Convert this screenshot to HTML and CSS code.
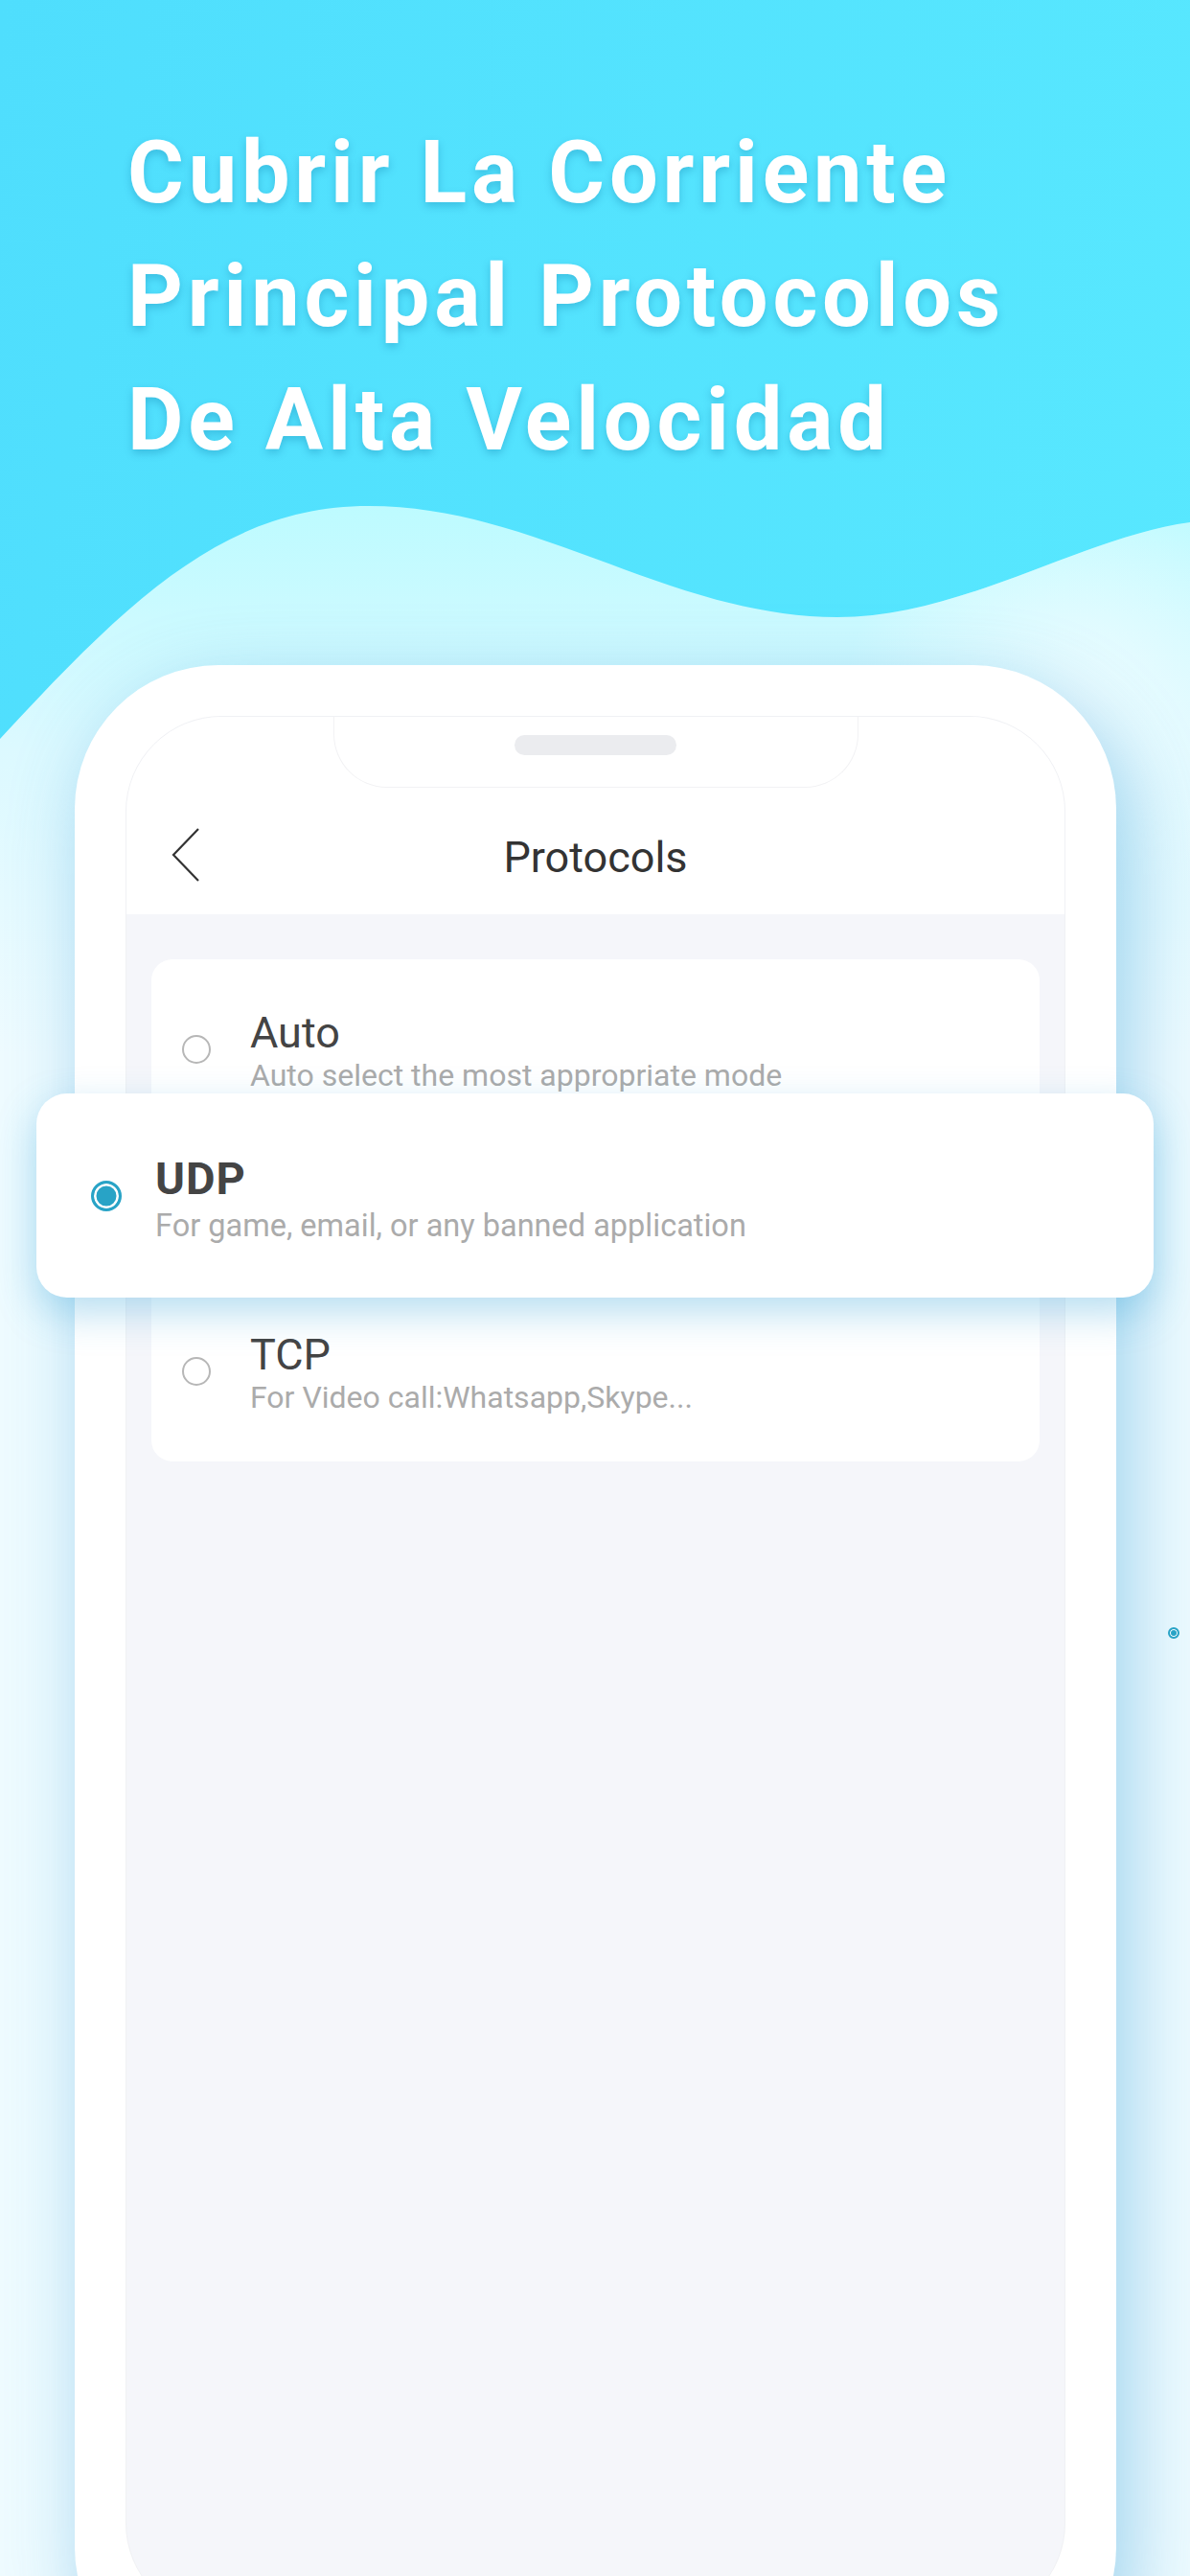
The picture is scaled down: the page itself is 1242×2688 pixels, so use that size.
FILE: index.html
```html
<!DOCTYPE html>
<html lang="es">
<head>
    <meta charset="UTF-8">
    <meta name="viewport" content="width=device-width, initial-scale=1.0">
    <title>Protocols</title>
    <link rel="stylesheet" href="styles.css">
</head>
<body>
<div class="page">
    <!-- fondo: ola clara -->
    <svg class="wave" width="1242" height="2688" viewBox="0 0 1242 2688">
        <defs>
            <linearGradient id="waveFill" x1="0" y1="520" x2="0" y2="1100" gradientUnits="userSpaceOnUse">
                <stop offset="0" stop-color="#bcfbff"/>
                <stop offset="0.45" stop-color="#dcf9ff"/>
                <stop offset="1" stop-color="#eefbff"/>
            </linearGradient>
            <radialGradient id="glow" cx="1120" cy="740" r="240" gradientUnits="userSpaceOnUse">
                <stop offset="0" stop-color="#f0fcff" stop-opacity="0.9"/>
                <stop offset="1" stop-color="#f0fcff" stop-opacity="0"/>
            </radialGradient>
        </defs>
        <path d="M0 771 C135 625 235 528 385 528 C560 528 700 644 874 644 C1005 644 1130 560 1242 545 L1242 2688 L0 2688 Z" fill="url(#waveFill)"/>
        <path d="M0 771 C135 625 235 528 385 528 C560 528 700 644 874 644 C1005 644 1130 560 1242 545 L1242 2688 L0 2688 Z" fill="url(#glow)"/>
    </svg>

    <h1 class="headline">Cubrir La Corriente<br>Principal Protocolos<br>De Alta Velocidad</h1>

    <div class="phone">
        <div class="screen">
            <div class="notch"><span class="speaker"></span></div>
            <div class="navbar">
                <svg class="back" width="30" height="56" viewBox="0 0 30 56">
                    <path d="M28 1 L2 28 L28 55" fill="none" stroke="#333" stroke-width="2.2"/>
                </svg>
                <span class="nav-title">Protocols</span>
                <span></span>
            </div>
            <div class="content">
                <ul class="list">
                    <li class="row">
                        <span class="radio"></span>
                        <div class="row-text">
                            <div class="row-title">Auto</div>
                            <div class="row-sub">Auto select the most appropriate mode</div>
                        </div>
                    </li>
                    <li class="row covered">
                        <span class="radio"></span>
                        <div class="row-text">
                            <div class="row-title">UDP</div>
                            <div class="row-sub">For game, email, or any banned application</div>
                        </div>
                    </li>
                    <li class="row">
                        <span class="radio"></span>
                        <div class="row-text">
                            <div class="row-title">TCP</div>
                            <div class="row-sub">For Video call:Whatsapp,Skype...</div>
                        </div>
                    </li>
                </ul>
            </div>
        </div>
    </div>

    <!-- tarjeta destacada encima de la lista -->
    <div class="float-card">
        <span class="radio checked"></span>
        <div class="row-text">
            <div class="row-title bold">UDP</div>
            <div class="row-sub">For game, email, or any banned application</div>
        </div>
    </div>

    <span class="dot"></span>
</div>
</body>
</html>
```

FILE: styles.css
```css
/* estilos */
body {
    margin: 0;
    font-family: Roboto, "Noto Sans", Arial, sans-serif;
}
.page {
    position: relative;
    width: 1242px;
    height: 2688px;
    overflow: hidden;
    background: linear-gradient(100deg, #4fdefd 0%, #5aeaff 100%);
    padding-top: 116px;
    box-sizing: border-box;
}
.wave {
    position: absolute;
    left: 0;
    top: 0;
}
.headline {
    position: relative;
    margin: 0 0 0 133px;
    font-family: Roboto, Arial, sans-serif;
    font-weight: 700;
    font-size: 90px;
    line-height: 129px;
    letter-spacing: 4.8px;
    color: #fff;
    text-shadow: 0 4px 8px rgba(0, 100, 150, 0.28);
}

/* teléfono */
.phone {
    position: relative;
    margin: 191px 0 0 78px;
    width: 1087px;
    height: 2114px;
    box-sizing: border-box;
    padding: 53px 53px 75px;
    background: #fff;
    border-radius: 150px;
    box-shadow: 14px 24px 80px rgba(60, 160, 215, 0.45);
}
.screen {
    height: 100%;
    box-sizing: border-box;
    border: 1px solid #f0f1f4;
    border-radius: 100px;
    overflow: hidden;
    background: #f5f6fa;
}
.notch {
    position: relative;
    z-index: 1;
    width: 548px;
    height: 75px;
    margin: -1px auto 0;
    box-sizing: border-box;
    padding-top: 20px;
    background: #fff;
    border: 1px solid #f2f2f4;
    border-top: none;
    border-radius: 0 0 56px 56px;
    display: flex;
    justify-content: center;
}
.speaker {
    width: 169px;
    height: 21px;
    border-radius: 11px;
    background: #ebecef;
}
.navbar {
    height: 132px;
    margin-top: -75px;
    padding-top: 75px;
    background: #fff;
    display: grid;
    grid-template-columns: 1fr auto 1fr;
    align-items: center;
}
.back {
    margin-left: 47px;
    margin-top: 8px;
}
.nav-title {
    font-size: 45px;
    color: #333;
    margin-top: 12px;
}
.content {
    padding: 47px 26px 0;
}
.list {
    list-style: none;
    margin: 0;
    padding: 10px 0;
    background: #fff;
    border-radius: 22px;
}
.row {
    height: 168px;
    display: flex;
    align-items: center;
    padding-left: 32px;
}
.row.covered {
    visibility: hidden;
}
.radio {
    flex: none;
    width: 30px;
    height: 30px;
    box-sizing: border-box;
    border: 2.5px solid #b7b7b7;
    border-radius: 50%;
}
.row-text {
    margin-left: 41px;
    margin-top: 8px;
}
.row-title {
    font-size: 45px;
    line-height: 46px;
    color: #444;
}
.row-sub {
    font-size: 32px;
    line-height: 42px;
    color: #ababab;
}

/* tarjeta flotante */
.float-card {
    position: absolute;
    left: 38px;
    top: 1141px;
    width: 1166px;
    height: 213px;
    box-sizing: border-box;
    padding-left: 57px;
    background: #fff;
    border-radius: 32px;
    display: flex;
    align-items: center;
    box-shadow: 0 16px 40px rgba(50, 160, 215, 0.35);
}
.float-card .row-text {
    margin-left: 35px;
    margin-top: 18px;
}
.float-card .row-title {
    font-size: 47px;
    letter-spacing: 1px;
}
.float-card .row-sub {
    font-size: 32.5px;
    line-height: 53px;
}
.bold {
    font-weight: 700;
}
.radio.checked {
    width: 32px;
    height: 32px;
    border: 3px solid #28a3c6;
    background: #28a3c6;
    box-shadow: inset 0 0 0 2.5px #fff;
}
.dot {
    position: absolute;
    left: 1219px;
    top: 1698px;
    width: 12px;
    height: 12px;
    box-sizing: border-box;
    border: 2px solid #28a3c6;
    border-radius: 50%;
    background: #28a3c6;
    box-shadow: inset 0 0 0 1px #fff;
}
```
